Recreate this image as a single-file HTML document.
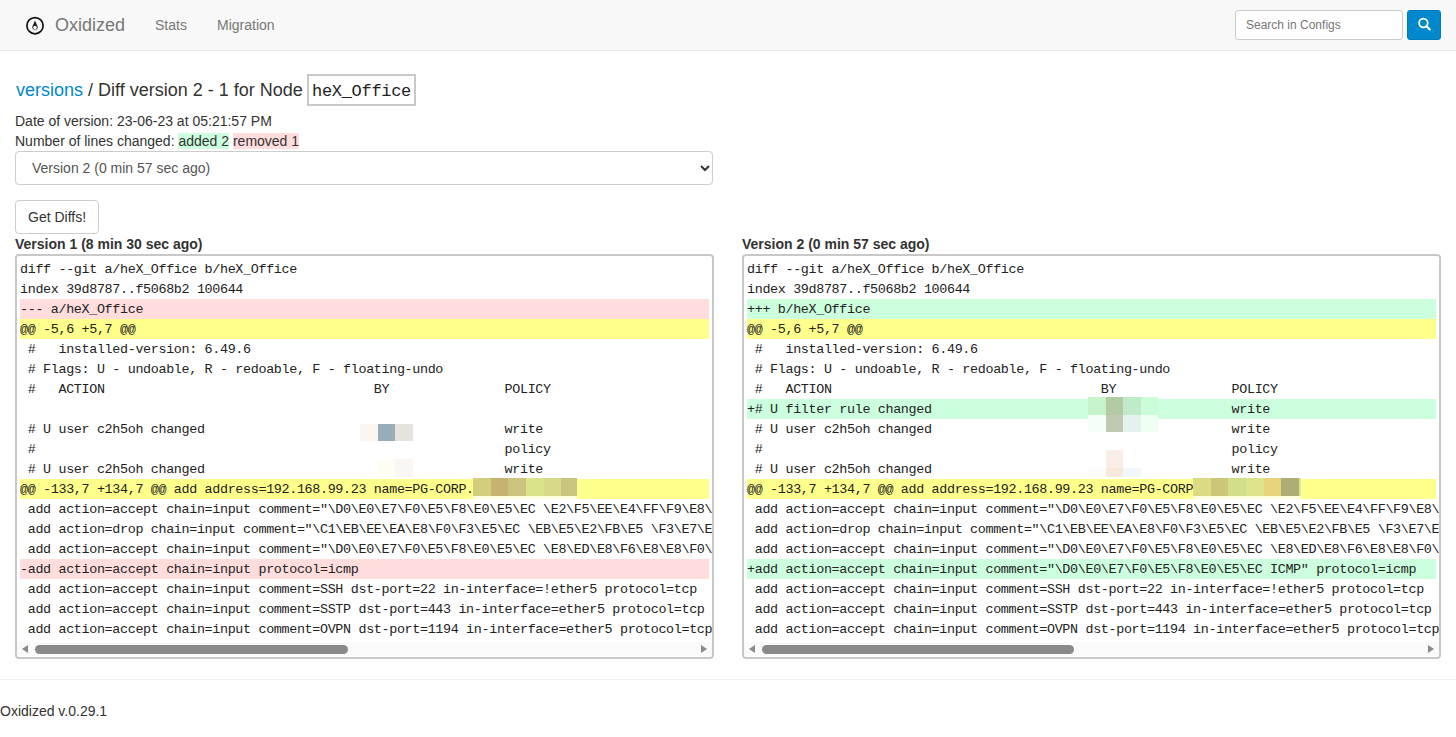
<!DOCTYPE html>
<html><head><meta charset="utf-8"><title>Oxidized</title>
<style>
*{box-sizing:border-box;margin:0;padding:0}
html,body{width:1456px;height:737px;overflow:hidden;background:#fff}
body{font-family:"Liberation Sans",sans-serif;font-size:14px;line-height:20px;color:#333;position:relative}
.nav{position:absolute;left:0;top:0;width:1456px;height:51px;background:#f8f8f8;border-bottom:1px solid #e7e7e7}
.logo{position:absolute;left:24px;top:15px}
.brand{position:absolute;left:55px;top:15px;font-size:18px;line-height:20px;color:#777}
.nl{position:absolute;top:15px;font-size:14px;line-height:20px;color:#777}
.search{position:absolute;left:1235px;top:10px;width:168px;height:30px;background:#fff;border:1px solid #ccc;border-radius:3px;font-size:12px;line-height:28px;padding-left:10px;color:#777}
.sbtn{position:absolute;left:1407px;top:10px;width:34px;height:30px;overflow:hidden;background:#0088cc;border:1px solid #0079bd;border-radius:3px}
.title{position:absolute;left:16px;top:80px;font-size:18px;line-height:20px;color:#333;white-space:nowrap}
.title a{color:#0088cc;text-decoration:none}
.nodebox{position:absolute;left:307px;top:74px;width:109px;height:32px;border:2px solid #c8c8c8;font-family:"Liberation Mono",monospace;font-size:17px;letter-spacing:-0.3px;line-height:28px;padding-top:2px;padding-left:3px;color:#222}
.p1{position:absolute;left:15px;top:111px;white-space:nowrap}
.p2{position:absolute;left:15px;top:131px;white-space:nowrap}
.hl-add{background:#ccffdd}
.hl-del{background:#ffdddd}
.sel{position:absolute;left:15px;top:151px;width:698px;height:34px;border:1px solid #ccc;border-radius:4px;background:#fff;color:#555;padding-left:16px;line-height:32px}
.chev{position:absolute;left:699px;top:163px}
.btn{position:absolute;left:15px;top:200px;width:84px;height:34px;border:1px solid #ccc;border-radius:4px;background:#fff;color:#333;line-height:32px;padding-left:12px}
.vl{position:absolute;top:234px;font-weight:bold;white-space:nowrap}
.panel{position:absolute;top:254px;width:699px;height:405px;border:2px solid #c8c8c8;border-radius:4px;background:#fff;overflow:hidden}
.code{position:absolute;left:0;top:0;width:695px;height:386px;padding:3px;overflow:hidden;font-family:"Liberation Mono",monospace;font-size:13.4px;letter-spacing:-0.344px;line-height:20px;color:#222;white-space:pre}
.code div{height:20px;width:689px;padding-top:1px;line-height:19px}
.code .del{background:#ffdddd}
.code .add{background:#ccffdd}
.code .idx{background:#ffff8c}
.panel i{position:absolute;display:block}
.track{position:absolute;left:0;top:386px;width:695px;height:14px;background:#fafafa}
.thumb{position:absolute;top:3px;height:9px;border-radius:5px;background:#898989}
.al{position:absolute;left:5px;top:3px;width:0;height:0;border-top:4.5px solid transparent;border-bottom:4.5px solid transparent;border-right:6px solid #8a8a8a}
.ar{position:absolute;left:684px;top:3px;width:0;height:0;border-top:4.5px solid transparent;border-bottom:4.5px solid transparent;border-left:6px solid #8a8a8a}
.hr{position:absolute;left:0;top:679px;width:1456px;height:1px;background:#eee}
.foot{position:absolute;left:0;top:701px;white-space:nowrap}

</style></head>
<body>
<div class="nav">
<svg class="logo" width="22" height="22" viewBox="0 0 22 22"><circle cx="11" cy="10.7" r="8.1" fill="none" stroke="#111" stroke-width="1.7"/><path d="M11 5.4 L8.4 11.6 C8 13.6 9.3 14.6 11 14.6 C12.7 14.6 14 13.6 13.6 11.6 Z" fill="#1a1a1a"/><circle cx="11" cy="12.5" r="1.75" fill="#fff"/><rect x="8.6" y="14.3" width="4.8" height="0.8" fill="#999"/></svg>
<div class="brand">Oxidized</div>
<div class="nl" style="left:155px">Stats</div>
<div class="nl" style="left:217px">Migration</div>
<div class="search">Search in Configs</div>
<div class="sbtn"><svg style="position:absolute;left:-1px;top:-1px" width="34" height="30" viewBox="0 0 34 30"><circle cx="16.4" cy="13" r="4.3" fill="none" stroke="#fff" stroke-width="1.8"/><path d="M19.6 16.2 L22.8 19.5" stroke="#fff" stroke-width="2.1" stroke-linecap="round"/></svg></div>
</div>
<div class="title"><a>versions</a> / Diff version 2 - 1 for Node</div>
<div class="nodebox">heX_Office</div>
<div class="p1">Date of version: 23-06-23 at 05:21:57 PM</div>
<div class="p2">Number of lines changed: <span class="hl-add">added 2</span> <span class="hl-del">removed 1</span></div>
<div class="sel">Version 2 (0 min 57 sec ago)</div>
<svg class="chev" width="12" height="10" viewBox="0 0 12 10"><path d="M2 3 L6 7 L10 3" fill="none" stroke="#333" stroke-width="2"/></svg>
<div class="btn">Get Diffs!</div>
<div class="vl" style="left:15px">Version 1 (8 min 30 sec ago)</div>
<div class="vl" style="left:742px">Version 2 (0 min 57 sec ago)</div>
<div class="panel" style="left:15px">
<div class="code"><div>diff --git a/heX_Office b/heX_Office</div><div>index 39d8787..f5068b2 100644</div><div class="del">--- a/heX_Office</div><div class="idx">@@ -5,6 +5,7 @@</div><div> #   installed-version: 6.49.6</div><div> # Flags: U - undoable, R - redoable, F - floating-undo</div><div> #   ACTION                                   BY               POLICY</div><div>&nbsp;</div><div> # U user c2h5oh changed                                       write</div><div> #                                                             policy</div><div> # U user c2h5oh changed                                       write</div><div class="idx">@@ -133,7 +134,7 @@ add address=192.168.99.23 name=PG-CORP.</div><div> add action=accept chain=input comment=&quot;\D0\E0\E7\F0\E5\F8\E0\E5\EC \E2\F5\EE\E4\FF\F9\E8\E5 \EF\E0\EA\E5\F2\FB&quot;</div><div> add action=drop chain=input comment=&quot;\C1\EB\EE\EA\E8\F0\F3\E5\EC \EB\E5\E2\FB\E5 \F3\E7\E5\EB\FB&quot;</div><div> add action=accept chain=input comment=&quot;\D0\E0\E7\F0\E5\F8\E0\E5\EC \E8\ED\E8\F6\E8\E8\F0\EE\E2\E0\ED\ED\FB\E5&quot;</div><div class="del">-add action=accept chain=input protocol=icmp</div><div> add action=accept chain=input comment=SSH dst-port=22 in-interface=!ether5 protocol=tcp</div><div> add action=accept chain=input comment=SSTP dst-port=443 in-interface=ether5 protocol=tcp</div><div> add action=accept chain=input comment=OVPN dst-port=1194 in-interface=ether5 protocol=tcp</div></div><i style="left:343px;top:168px;width:18px;height:17px;background:#faf6f0"></i><i style="left:361px;top:168px;width:17px;height:17px;background:#98adb9"></i><i style="left:378px;top:168px;width:18px;height:17px;background:#e6e2dc"></i><i style="left:361px;top:203px;width:17px;height:18px;background:#fffef5"></i><i style="left:378px;top:203px;width:18px;height:18px;background:#faf6f3"></i><i style="left:456px;top:222px;width:18px;height:18px;background:#d2ce7e"></i><i style="left:474px;top:222px;width:17px;height:18px;background:#c8b272"></i><i style="left:491px;top:222px;width:18px;height:18px;background:#cac47e"></i><i style="left:509px;top:222px;width:18px;height:18px;background:#dae28c"></i><i style="left:527px;top:222px;width:17px;height:18px;background:#d7da86"></i><i style="left:544px;top:222px;width:16px;height:18px;background:#c9c47f"></i><i style="left:456px;top:240px;width:104px;height:3px;background:#fffde0"></i>
<div class="track"><span class="al"></span><span class="thumb" style="left:18px;width:313px"></span><span class="ar"></span></div>
</div>
<div class="panel" style="left:742px">
<div class="code"><div>diff --git a/heX_Office b/heX_Office</div><div>index 39d8787..f5068b2 100644</div><div class="add">+++ b/heX_Office</div><div class="idx">@@ -5,6 +5,7 @@</div><div> #   installed-version: 6.49.6</div><div> # Flags: U - undoable, R - redoable, F - floating-undo</div><div> #   ACTION                                   BY               POLICY</div><div class="add">+# U filter rule changed                                       write</div><div> # U user c2h5oh changed                                       write</div><div> #                                                             policy</div><div> # U user c2h5oh changed                                       write</div><div class="idx">@@ -133,7 +134,7 @@ add address=192.168.99.23 name=PG-CORP</div><div> add action=accept chain=input comment=&quot;\D0\E0\E7\F0\E5\F8\E0\E5\EC \E2\F5\EE\E4\FF\F9\E8\E5 \EF\E0\EA\E5\F2\FB&quot;</div><div> add action=drop chain=input comment=&quot;\C1\EB\EE\EA\E8\F0\F3\E5\EC \EB\E5\E2\FB\E5 \F3\E7\E5\EB\FB&quot;</div><div> add action=accept chain=input comment=&quot;\D0\E0\E7\F0\E5\F8\E0\E5\EC \E8\ED\E8\F6\E8\E8\F0\EE\E2\E0\ED\ED\FB\E5&quot;</div><div class="add">+add action=accept chain=input comment=&quot;\D0\E0\E7\F0\E5\F8\E0\E5\EC ICMP&quot; protocol=icmp</div><div> add action=accept chain=input comment=SSH dst-port=22 in-interface=!ether5 protocol=tcp</div><div> add action=accept chain=input comment=SSTP dst-port=443 in-interface=ether5 protocol=tcp</div><div> add action=accept chain=input comment=OVPN dst-port=1194 in-interface=ether5 protocol=tcp</div></div><i style="left:344px;top:141px;width:18px;height:18px;background:#c6f2cc"></i><i style="left:362px;top:141px;width:17px;height:18px;background:#b3caa5"></i><i style="left:379px;top:141px;width:18px;height:18px;background:#c0ebca"></i><i style="left:397px;top:141px;width:17px;height:18px;background:#ccfdd9"></i><i style="left:344px;top:159px;width:18px;height:17px;background:#f3fff7"></i><i style="left:362px;top:159px;width:17px;height:17px;background:#c2c9b3"></i><i style="left:379px;top:159px;width:18px;height:17px;background:#e3f2ec"></i><i style="left:397px;top:159px;width:17px;height:17px;background:#effff4"></i><i style="left:362px;top:194px;width:17px;height:18px;background:#fbeee9"></i><i style="left:344px;top:212px;width:18px;height:9px;background:#fefcfb"></i><i style="left:362px;top:212px;width:17px;height:9px;background:#f9e8dc"></i><i style="left:379px;top:212px;width:18px;height:9px;background:#f2f7fb"></i><i style="left:449px;top:222px;width:18px;height:18px;background:#dcdb84"></i><i style="left:467px;top:222px;width:17px;height:18px;background:#cdc57a"></i><i style="left:484px;top:222px;width:18px;height:18px;background:#d3de88"></i><i style="left:502px;top:222px;width:18px;height:18px;background:#dde38a"></i><i style="left:520px;top:222px;width:17px;height:18px;background:#e6d57a"></i><i style="left:537px;top:222px;width:18px;height:18px;background:#aead78"></i><i style="left:555px;top:222px;width:2px;height:18px;background:#d6e89a"></i><i style="left:449px;top:240px;width:108px;height:3px;background:#fffde0"></i>
<div class="track"><span class="al"></span><span class="thumb" style="left:18px;width:312px"></span><span class="ar"></span></div>
</div>
<div class="hr"></div>
<div class="foot">Oxidized v.0.29.1</div>

</body></html>
